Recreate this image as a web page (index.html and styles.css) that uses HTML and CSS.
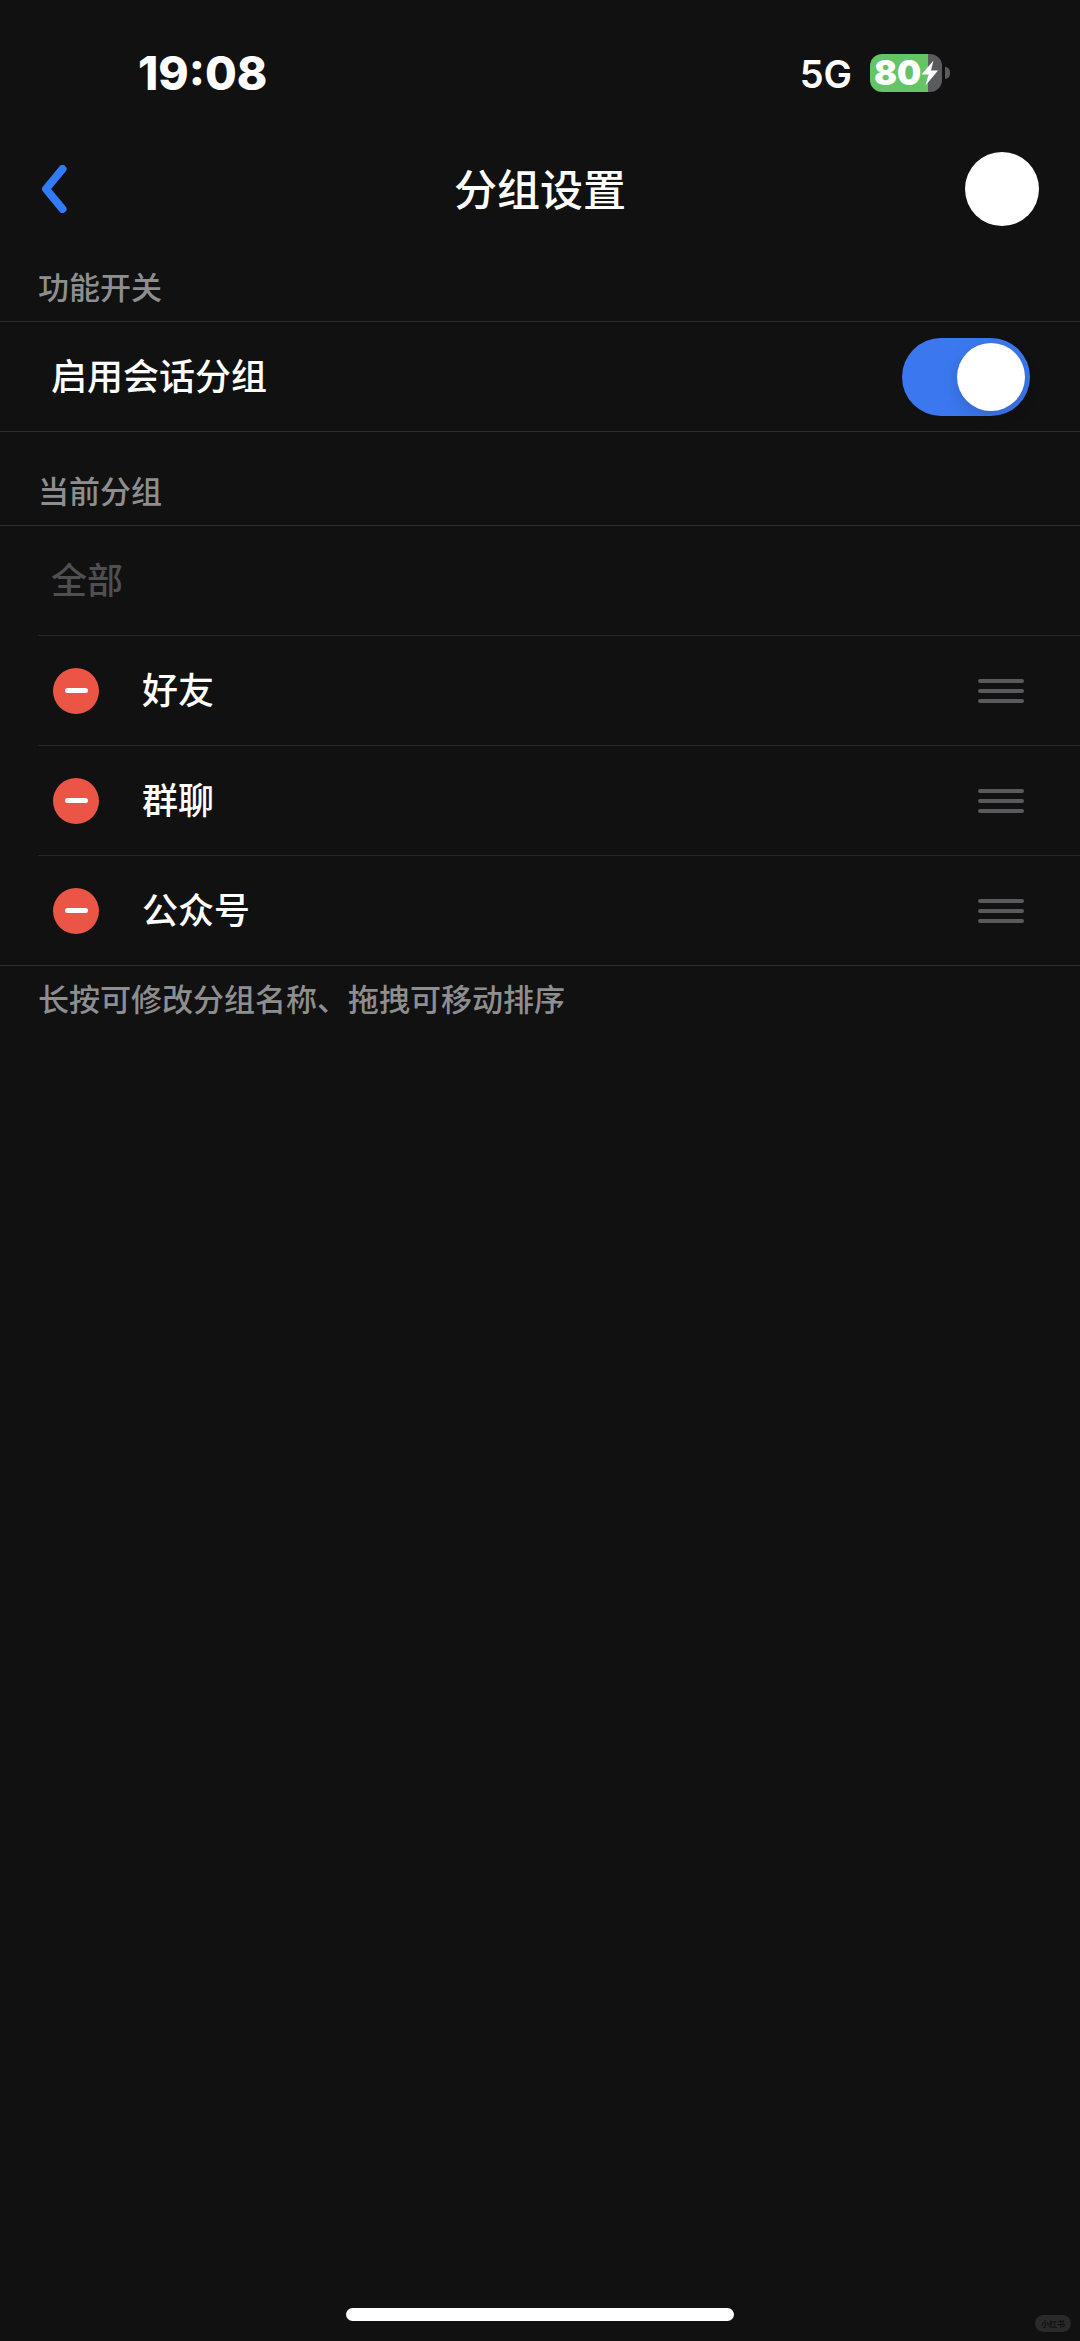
FILE: index.html
```html
<!DOCTYPE html>
<html lang="zh-CN">
<head>
<meta charset="utf-8">
<meta name="viewport" content="width=device-width, initial-scale=1">
<title>分组设置</title>
<link rel="stylesheet" href="styles.css">
</head>
<body>
<div class="status-bar">
  <time class="clock">19:08</time>
  <div class="status-right">
    <span class="network">5G</span>
    <div class="battery">
      <div class="battery-body">
        <span class="battery-level">80</span>
        <svg class="bolt" width="18" height="26" viewBox="0 0 18 26" aria-hidden="true"><path d="M12.500 0.500 0.500 14.500h7L4.500 25.500 17 10.500H10z" fill="#fff"/></svg>
      </div>
      <span class="battery-tip"></span>
    </div>
  </div>
</div>

<header class="nav">
  <button class="back" type="button" aria-label="返回">
    <svg width="26" height="48" viewBox="0 0 26 48" aria-hidden="true"><path d="M21.500 4 5 24 21.500 44" fill="none" stroke="#327bf6" stroke-width="8" stroke-linecap="round" stroke-linejoin="round"/></svg>
  </button>
  <h1 class="title">分组设置</h1>
  <button class="action" type="button" aria-label="完成"></button>
</header>

<main class="content">
  <section>
    <h2 class="section-label">功能开关</h2>
    <div class="group">
      <div class="row">
        <label class="row-name" for="enable">启用会话分组</label>
        <input class="switch" id="enable" type="checkbox" role="switch" checked>
      </div>
    </div>
  </section>

  <section>
    <h2 class="section-label section-label-next">当前分组</h2>
    <ul class="group">
      <li class="row row-inset row-fixed"><span class="row-name">全部</span></li>
      <li class="row row-inset">
        <button class="remove" type="button" aria-label="删除好友"></button>
        <span class="row-name">好友</span>
        <button class="handle" type="button" aria-label="移动好友"><span></span><span></span><span></span></button>
      </li>
      <li class="row row-inset">
        <button class="remove" type="button" aria-label="删除群聊"></button>
        <span class="row-name">群聊</span>
        <button class="handle" type="button" aria-label="移动群聊"><span></span><span></span><span></span></button>
      </li>
      <li class="row">
        <button class="remove" type="button" aria-label="删除公众号"></button>
        <span class="row-name">公众号</span>
        <button class="handle" type="button" aria-label="移动公众号"><span></span><span></span><span></span></button>
      </li>
    </ul>
    <p class="hint">长按可修改分组名称、拖拽可移动排序</p>
  </section>
</main>

<footer class="bottom">
  <div class="home-indicator"></div>
  <span class="watermark">小红书</span>
</footer>
</body>
</html>
```

FILE: styles.css
```css
* {
  box-sizing: border-box;
}

body {
  margin: 0;
  min-height: 100vh;
  display: flex;
  flex-direction: column;
  background: #111;
  color: #fff;
  font-family: "Noto Sans CJK SC", sans-serif;
}

button {
  padding: 0;
  border: 0;
  background: none;
}

/* Status bar */
.status-bar {
  display: flex;
  justify-content: space-between;
  align-items: center;
  height: 146px;
  padding: 0 130px 0 138px;
  font-family: Inter, sans-serif;
}

.clock {
  font-size: 46px;
  font-weight: 800;
}

.status-right {
  display: flex;
  align-items: center;
  gap: 18px;
}

.network {
  padding-top: 2px;
  font-size: 38px;
  font-weight: 600;
}

.battery {
  display: flex;
  align-items: center;
  gap: 3px;
}

.battery-body {
  display: flex;
  align-items: center;
  width: 72px;
  height: 38px;
  padding-left: 4px;
  border-radius: 12px;
  background: linear-gradient(to right, #65c466 80%, #5b5b5d 80%);
}

.battery-level {
  font-size: 34px;
  font-weight: 900;
  line-height: 38px;
}

.bolt {
  flex: none;
}

.battery-tip {
  width: 5px;
  height: 12px;
  border-radius: 0 5px 5px 0;
  background: #5b5b5d;
}

/* Navigation */
.nav {
  display: grid;
  grid-template-columns: 1fr auto 1fr;
  align-items: center;
  height: 86px;
  padding: 0 41px;
}

.back {
  display: flex;
  justify-self: start;
}

.title {
  margin: 0;
  padding-bottom: 4px;
  font-size: 43px;
  font-weight: 500;
  line-height: 60px;
}

.action {
  justify-self: end;
  width: 74px;
  height: 74px;
  border-radius: 50%;
  background: #fff;
}

/* Settings groups */
.content {
  flex: 1;
}

.section-label,
.hint {
  margin: 0;
  padding: 0 38px;
  color: #8e8e90;
  font-size: 31px;
  font-weight: 500;
  line-height: 44px;
}

.section-label {
  padding-top: 32px;
  padding-bottom: 13px;
}

.section-label-next {
  padding-top: 36px;
}

.hint {
  padding-top: 10px;
}

.group {
  margin: 0;
  padding: 0;
  border-top: 1px solid #2d2d2f;
  list-style: none;
}

.row {
  display: flex;
  align-items: center;
  height: 110px;
  padding: 0 50px 0 51px;
  border-bottom: 1px solid #2d2d2f;
}

.row-inset {
  margin-left: 38px;
  padding-left: 13px;
  border-color: #272729;
}

.row-name {
  flex: 1;
  padding-bottom: 6px;
  font-size: 36px;
  font-weight: 500;
  line-height: 52px;
}

.row-fixed {
  color: #4f4f51;
}

.switch {
  appearance: none;
  display: flex;
  align-items: center;
  width: 128px;
  height: 78px;
  margin: 0;
  padding: 0 5px;
  border-radius: 39px;
  background: #39393d;
}

.switch:checked {
  justify-content: flex-end;
  background: #3b78ef;
}

.switch::before {
  content: "";
  width: 68px;
  height: 68px;
  border-radius: 50%;
  background: #fff;
  box-shadow: 0 6px 16px rgba(0, 0, 0, 0.15);
}

.remove {
  display: flex;
  align-items: center;
  justify-content: center;
  width: 46px;
  height: 46px;
  margin: 0 43px 0 2px;
  border-radius: 50%;
  background: #eb5545;
}

.remove::before {
  content: "";
  width: 23px;
  height: 5px;
  border-radius: 3px;
  background: #fff;
}

.handle {
  display: flex;
  flex-direction: column;
  gap: 6px;
  width: 46px;
  margin-right: 6px;
}

.handle span {
  height: 4px;
  border-radius: 2px;
  background: #5a5a5c;
}

/* Bottom edge */
.bottom {
  position: relative;
  display: flex;
  justify-content: center;
  padding-bottom: 20px;
}

.home-indicator {
  width: 36%;
  height: 13px;
  border-radius: 7px;
  background: #fff;
}

.watermark {
  position: absolute;
  right: 9px;
  bottom: 9px;
  padding: 0 6px;
  border-radius: 9px;
  background: #2a2a2a;
  color: #111;
  font-size: 8px;
  font-weight: 700;
  line-height: 17px;
}
```
